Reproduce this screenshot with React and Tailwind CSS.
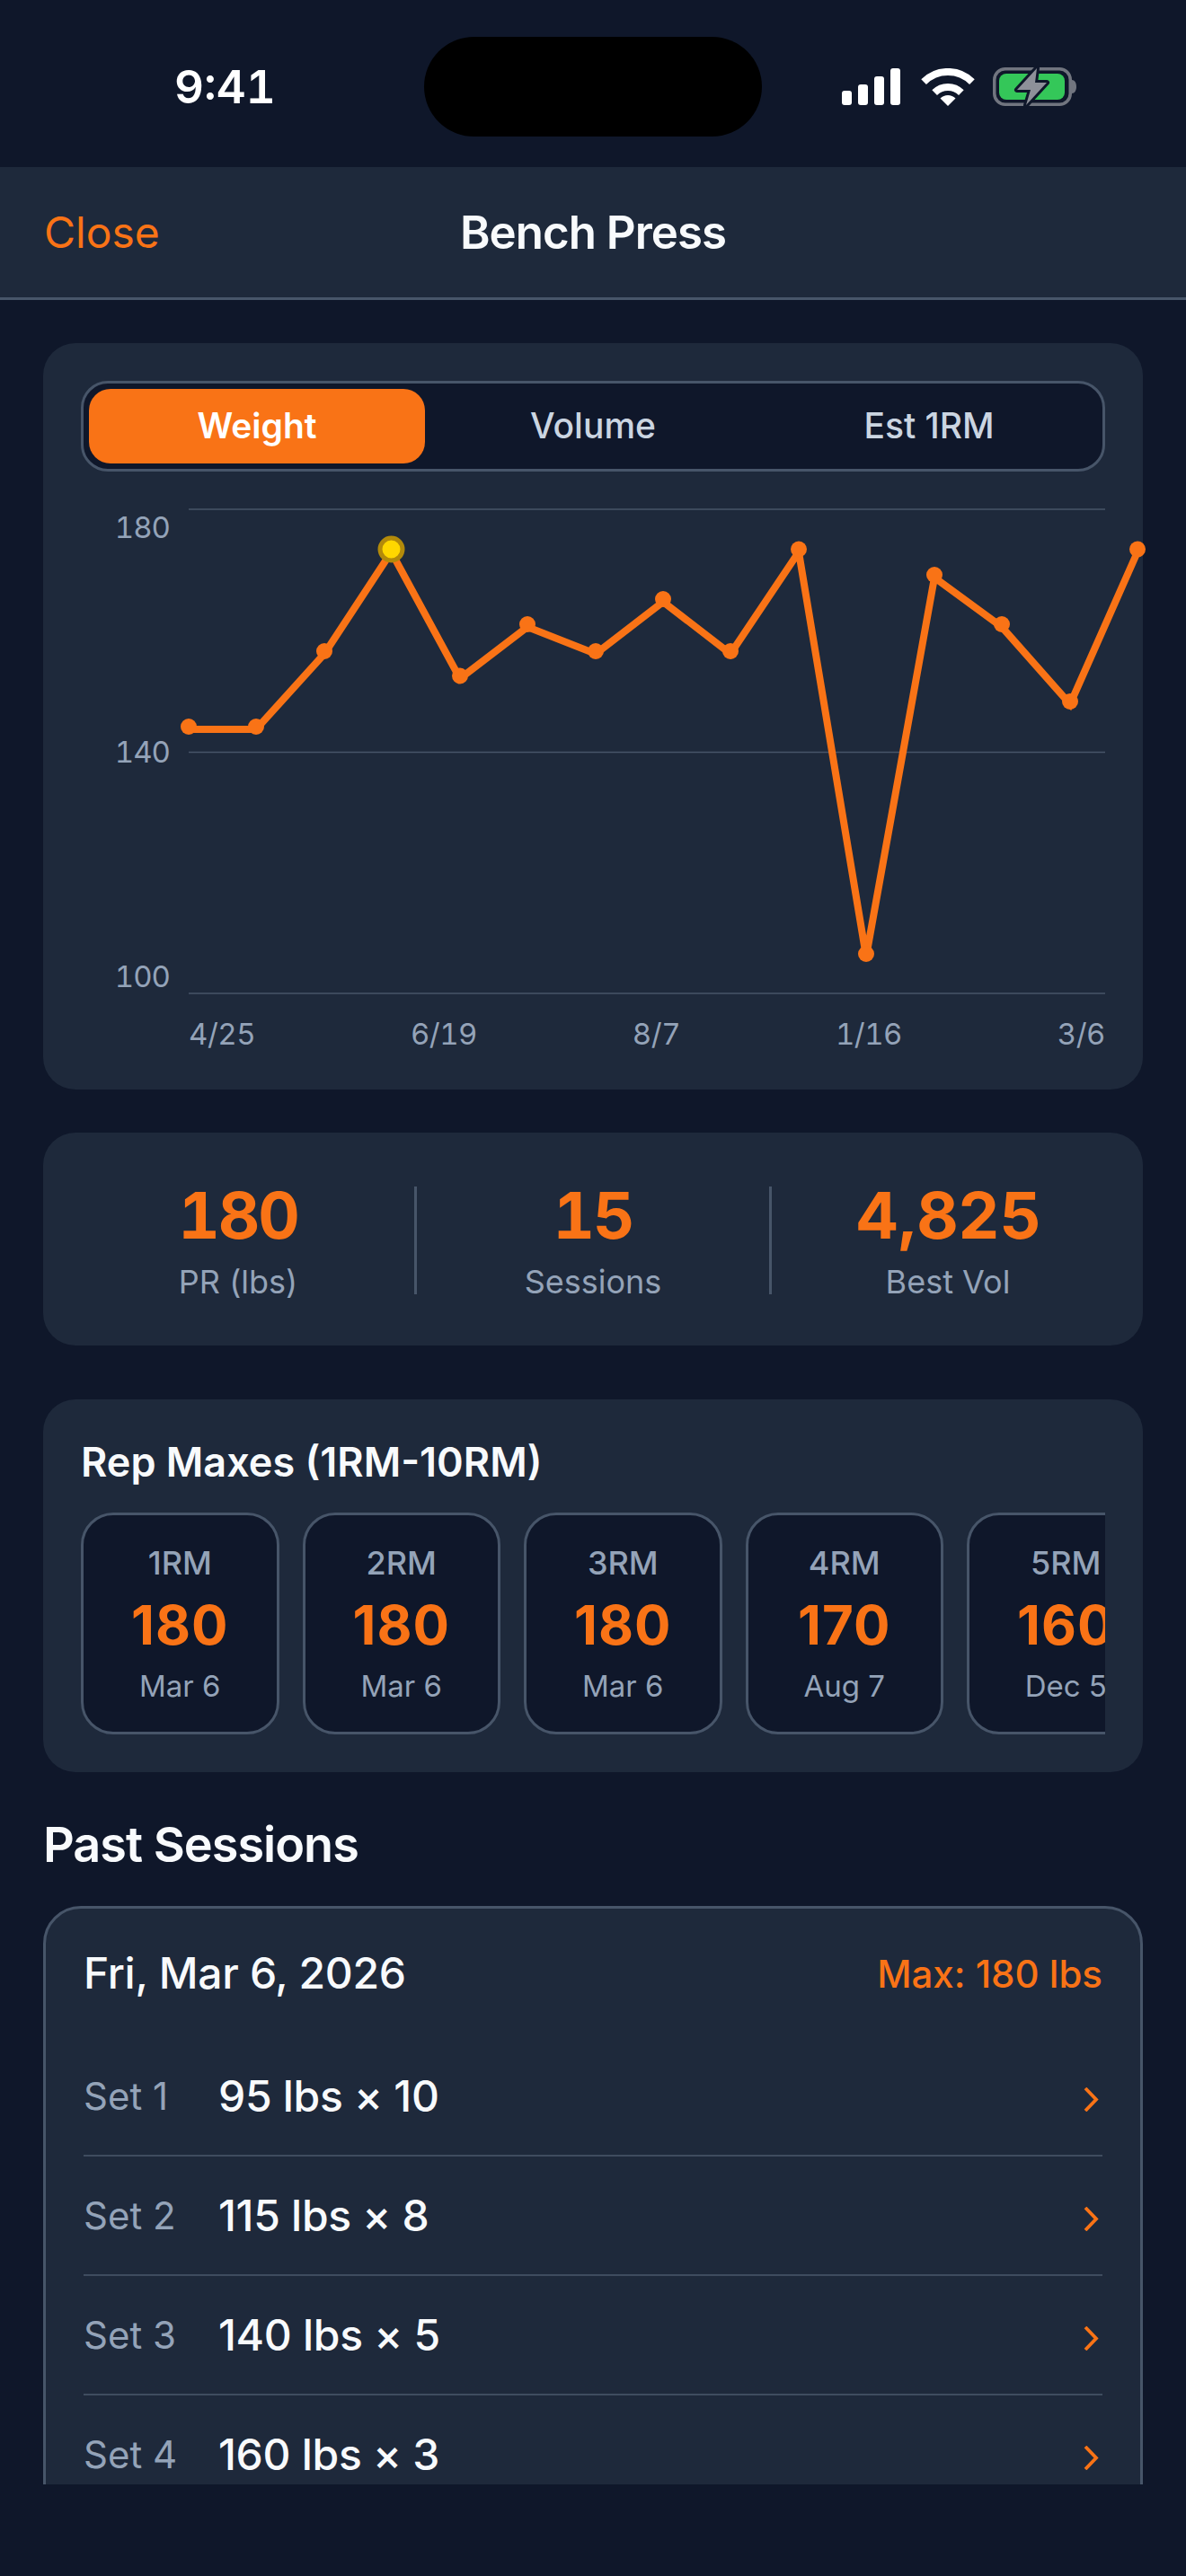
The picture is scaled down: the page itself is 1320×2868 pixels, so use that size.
const points = [
  [120, 263], [195, 263], [271, 179], [345.5, 65.5], [422, 206.5], [497, 149], [573, 179],
  [648, 121], [723, 179], [799, 65.5], [874, 516], [950, 94], [1025, 149], [1101, 235], [1176, 65.5],
];

const reps = [
  { label: '1RM', value: '180', date: 'Mar 6' },
  { label: '2RM', value: '180', date: 'Mar 6' },
  { label: '3RM', value: '180', date: 'Mar 6' },
  { label: '4RM', value: '170', date: 'Aug 7' },
  { label: '5RM', value: '160', date: 'Dec 5' },
];

const sets = [
  { label: 'Set 1', value: '95 lbs × 10' },
  { label: 'Set 2', value: '115 lbs × 8' },
  { label: 'Set 3', value: '140 lbs × 5' },
  { label: 'Set 4', value: '160 lbs × 3' },
];

function SignalIcon() {
  return (
    <svg width="65" height="41" viewBox="0 0 65 41" className="shrink-0">
      <rect x="0" y="25" width="11" height="16" rx="3" fill="#fff" />
      <rect x="18" y="18" width="11" height="23" rx="3" fill="#fff" />
      <rect x="36" y="9" width="11" height="32" rx="3" fill="#fff" />
      <rect x="54" y="0" width="11" height="41" rx="3" fill="#fff" />
    </svg>
  );
}

function WifiIcon() {
  return (
    <svg width="60" height="42" viewBox="0 0 60 42" className="shrink-0">
      <path d="M3.1 15.1A38 38 0 0 1 56.9 15.1" fill="none" stroke="#fff" strokeWidth="8" />
      <path d="M15.15 27.15A21 21 0 0 1 44.85 27.15" fill="none" stroke="#fff" strokeWidth="8" />
      <path d="M30 42L21.5 33.5A12 12 0 0 1 38.5 33.5Z" fill="#fff" />
    </svg>
  );
}

function BatteryIcon() {
  return (
    <svg width="93" height="43" viewBox="0 0 93 43" className="shrink-0 overflow-visible">
      <rect x="1.75" y="1.75" width="84.5" height="39.5" rx="12" fill="none" stroke="#71757f" strokeWidth="3.5" />
      <rect x="7" y="7" width="73" height="29" rx="8" fill="#34c759" />
      <path d="M88 14C91 14 93 17 93 21.5C93 26 91 29 88 29Z" fill="#71757f" />
      <path
        d="M49 1L27 25H42L37 42L60 17H47Z"
        fill="#8e9099"
        stroke="#0f172a"
        strokeWidth="6"
        strokeLinejoin="round"
        paintOrder="stroke"
      />
    </svg>
  );
}

function Chart() {
  const line = points.map(([x, y]) => `${x},${y + 3}`).join(' ');
  return (
    <div className="mt-[21px]">
      <svg width="1140" height="580" viewBox="0 0 1140 580" className="block overflow-visible">
        {[21, 291.5, 560].map((y) => (
          <line key={y} x1="120" x2="1140" y1={y} y2={y} stroke="#475569" strokeWidth="1.5" />
        ))}
        <g fill="#94a3b8" fontSize="33" textAnchor="end" className="tabular-nums tracking-[-1px]">
          <text x="99" y="52.5">180</text>
          <text x="99" y="303">140</text>
          <text x="99" y="552.5">100</text>
        </g>
        <polyline points={line} fill="none" stroke="#f97316" strokeWidth="8" />
        {points.map(([x, y], i) => (
          <circle key={i} cx={x} cy={y} r="9" fill="#f97316" />
        ))}
        <circle cx="345.5" cy="65.5" r="12.5" fill="#ffd700" stroke="#b38a0a" strokeWidth="5" />
      </svg>
      <div className="mt-[5px] ml-[120px] flex justify-between text-[33px] leading-[40px] tabular-nums tracking-[-0.5px] text-[#94a3b8]">
        <span>4/25</span>
        <span>6/19</span>
        <span>8/7</span>
        <span>1/16</span>
        <span>3/6</span>
      </div>
    </div>
  );
}

function Stat({ value, label, narrow }) {
  return (
    <div className="flex-1 flex flex-col items-center">
      <div className={`text-[72px] leading-[86px] font-bold text-[#f97316] -mt-[2px] ${narrow ? 'tabular-nums tracking-[-2px]' : ''}`}>{value}</div>
      <div className="mt-[9px] text-[36px] leading-[44px] text-[#94a3b8]">{label}</div>
    </div>
  );
}

export default function App() {
  return (
    <div className="h-[2868px] bg-[#0f172a] font-[Inter,sans-serif] overflow-hidden">
      <div className="h-[186px] pt-[7px] pl-[194px] flex items-center">
        <div className="w-[278px] text-[51px] leading-[60px] font-semibold tabular-nums text-white">9:41</div>
        <div className="w-[376px] h-[111px] mr-[89px] rounded-full bg-black" />
        <div className="flex items-center">
          <SignalIcon />
          <div className="ml-[23px]"><WifiIcon /></div>
          <div className="ml-[20px]"><BatteryIcon /></div>
        </div>
      </div>

      <header className="h-[148px] px-[49px] bg-[#1e293b] border-b-[3px] border-[#475569] grid grid-cols-3 items-center">
        <div className="text-[48px] leading-[58px] text-[#f97316]">Close</div>
        <div className="text-[51px] leading-[58px] tracking-[-1px] font-semibold text-[#f8fafc] text-center whitespace-nowrap">Bench Press</div>
      </header>

      <main className="h-[2432px] overflow-hidden px-[48px] pt-[48px]">
        <section className="bg-[#1e293b] rounded-[36px] p-[42px]">
          <div className="h-[101px] p-[6px] rounded-[30px] border-[3px] border-[#475569] bg-[#0f172a] flex">
            <div className="flex-1 rounded-[24px] bg-[#f97316] flex items-center justify-center text-[39px] font-semibold text-white">Weight</div>
            <div className="flex-1 flex items-center justify-center text-[39px] font-medium text-[#cbd5e1]">Volume</div>
            <div className="flex-1 flex items-center justify-center text-[39px] font-medium text-[#cbd5e1]">Est 1RM</div>
          </div>
          <Chart />
        </section>

        <section className="mt-[48px] h-[237px] pt-[2px] bg-[#1e293b] rounded-[36px] px-[21px] flex items-center">
          <Stat value="180" label="PR (lbs)" narrow />
          <div className="w-[3px] h-[120px] bg-[#475569]" />
          <Stat value="15" label="Sessions" narrow />
          <div className="w-[3px] h-[120px] bg-[#475569]" />
          <Stat value="4,825" label="Best Vol" />
        </section>

        <section className="mt-[60px] bg-[#1e293b] rounded-[36px] p-[42px]">
          <h2 className="text-[45px] leading-[56px] font-semibold text-[#f8fafc]">Rep Maxes (1RM-10RM)</h2>
          <div className="mt-[28px] flex gap-[26px] overflow-hidden">
            {reps.map((r) => (
              <div key={r.label} className="w-[220.5px] h-[247px] shrink-0 rounded-[36px] border-[3px] border-[#475569] bg-[#0f172a] pt-[33px] flex flex-col items-center">
                <div className="text-[36px] leading-[40px] font-medium text-[#94a3b8]">{r.label}</div>
                <div className="mt-[13px] text-[60px] leading-[72px] font-bold tracking-[1px] text-[#f97316]">{r.value}</div>
                <div className="mt-[12px] text-[33px] leading-[40px] text-[#94a3b8]">{r.date}</div>
              </div>
            ))}
          </div>
        </section>

        <h2 className="mt-[49px] text-[54px] leading-[64px] tracking-[-1px] font-semibold text-[#f8fafc]">Past Sessions</h2>

        <section className="mt-[36px] rounded-[42px] border-[3px] border-[#475569] bg-[#1e293b] p-[42px]">
          <div className="h-[60px] mb-[41px] flex items-center justify-between">
            <div className="text-[48px] font-medium tracking-[-0.3px] text-[#f8fafc]">Fri, Mar 6, 2026</div>
            <div className="text-[42px] font-medium text-[#f97316]">Max: 180 lbs</div>
          </div>
          {sets.map((s) => (
            <div key={s.label} className="h-[133px] border-b-2 border-[#475569]/80 flex items-center">
              <div className="w-[150px] text-[42px] text-[#94a3b8]">{s.label}</div>
              <div className="flex-1 text-[48px] font-medium tracking-[-0.3px] text-[#f8fafc]">{s.value}</div>
              <svg width="18" height="27" viewBox="0 0 18 27" className="mr-[3px] mt-[8px] shrink-0">
                <path d="M2 1L14 13.5L2 26" fill="none" stroke="#f97316" strokeWidth="3.8" />
              </svg>
            </div>
          ))}
        </section>
      </main>
    </div>
  );
}
